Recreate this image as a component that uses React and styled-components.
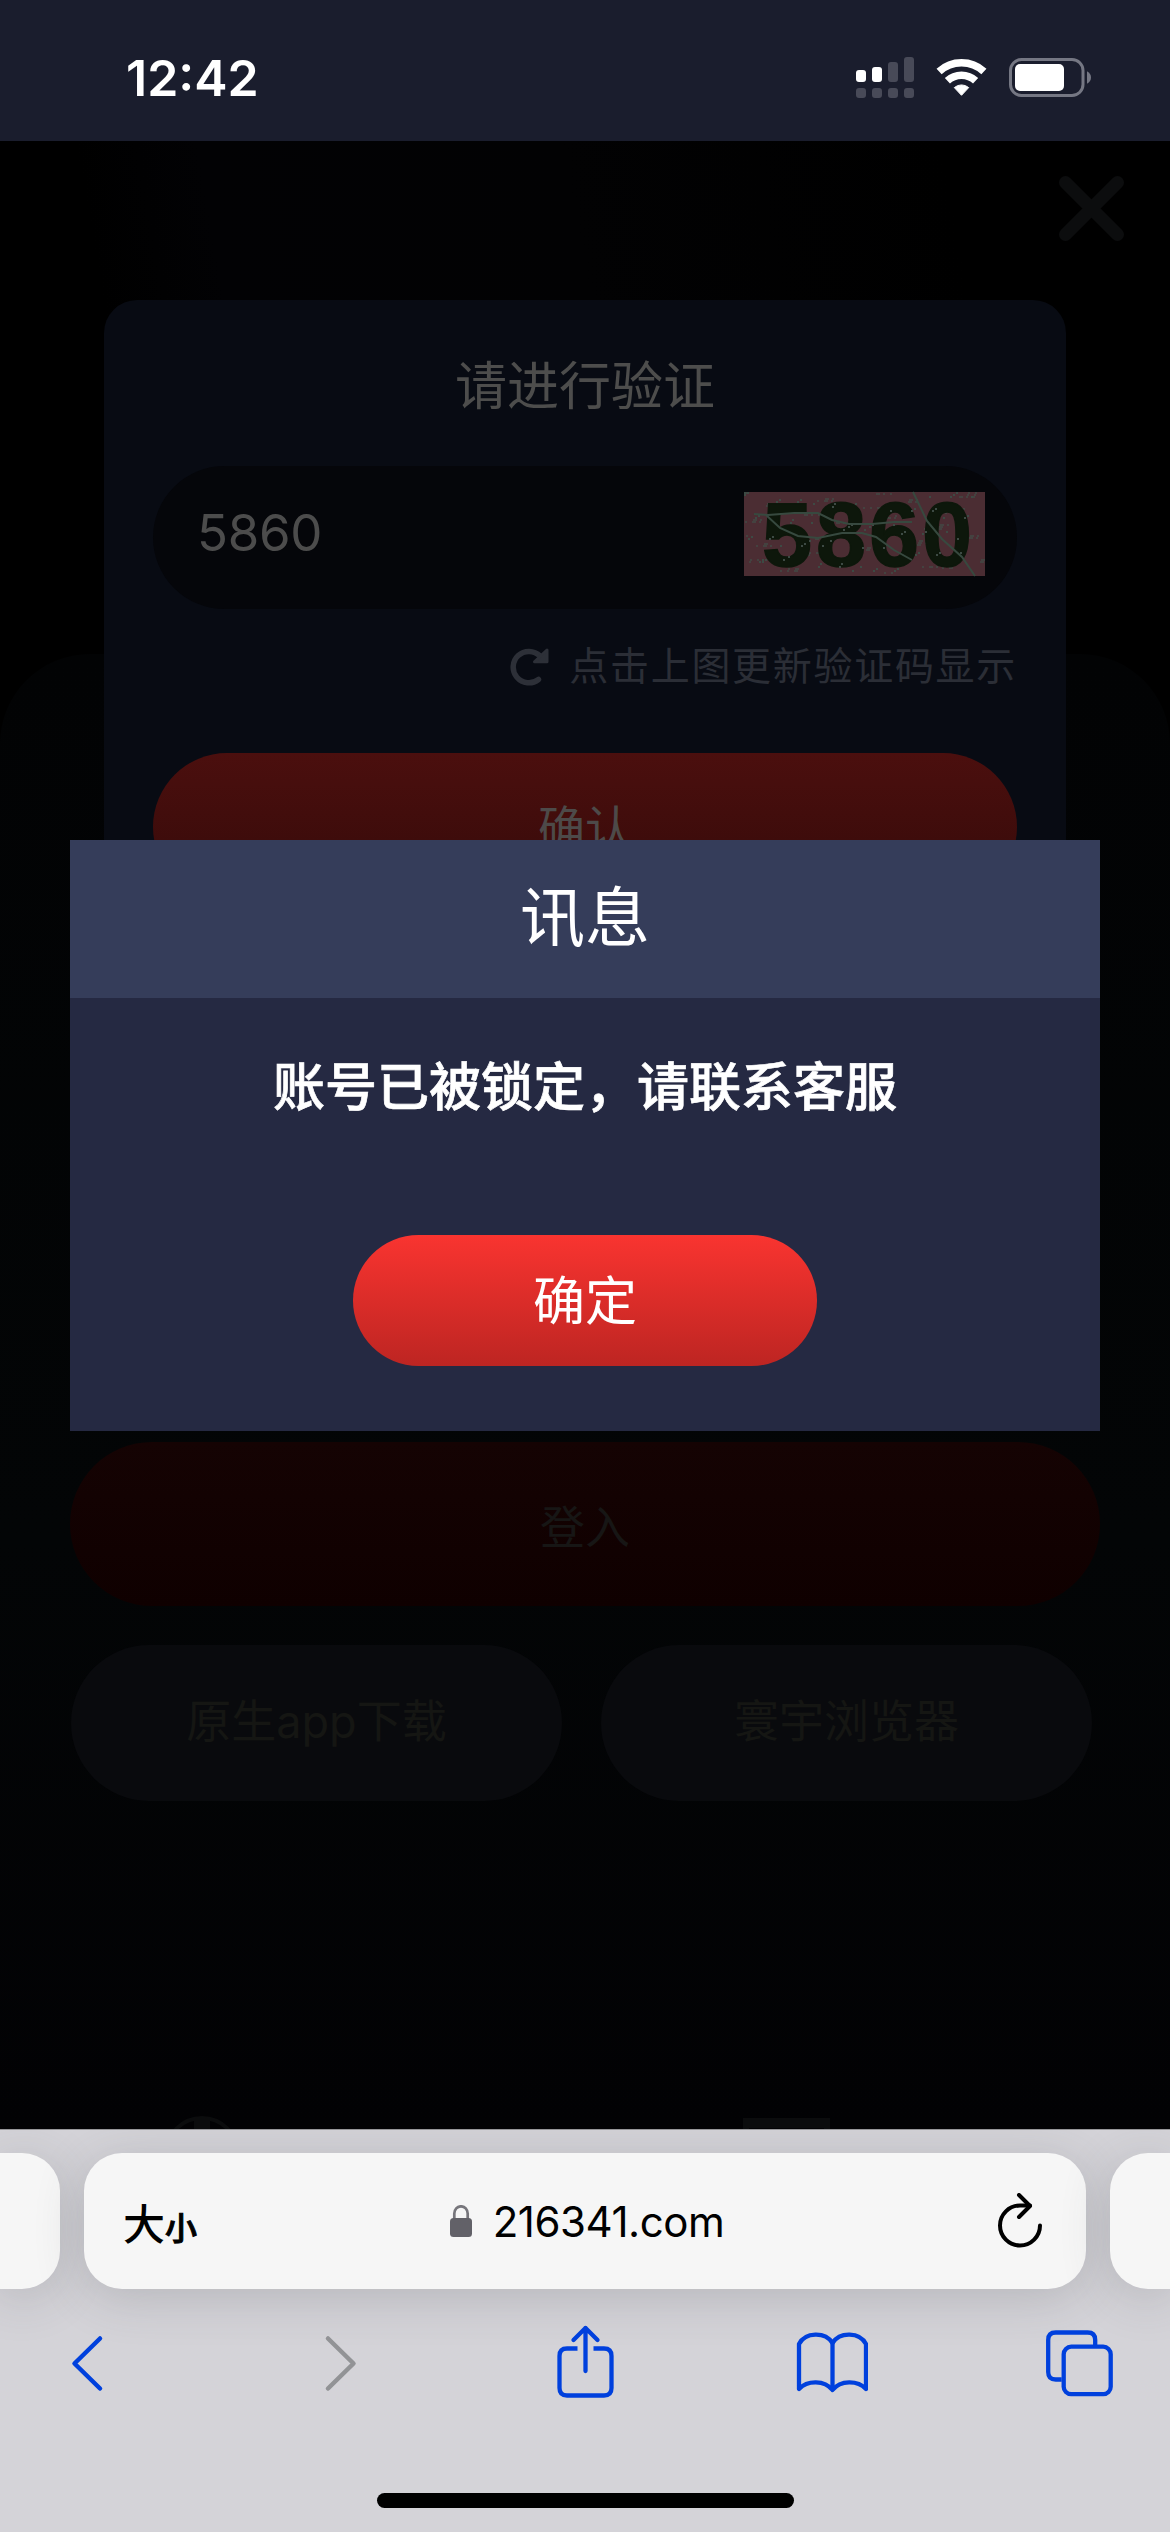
import styled, { createGlobalStyle } from 'styled-components';

const captchaSpecks = Array.from({ length: 130 }, (_, i) => ({
  x: (i * 67 + (i % 7) * 19) % 238,
  y: (i * 31 + (i % 5) * 13) % 81,
  w: i % 3 === 0 ? 4 : 2,
}));

export default function App() {
  return (
    <Screen>
      <GlobalStyle />
      <StatusBar>
        <Clock>12:42</Clock>
        <StatusIcons>
          <SignalIcon />
          <WifiIcon />
          <BatteryIcon />
        </StatusIcons>
      </StatusBar>

      <Page>
        <LoginPage>
          <LoginHeader>
            <svg width="67" height="67" viewBox="0 0 67 67" fill="none" stroke="#0c0d0e" strokeWidth="13" strokeLinecap="round">
              <path d="M7.500 7.500L59.500 59.500M59.500 7.500L7.500 59.500" />
            </svg>
          </LoginHeader>
          <LoginPanel>
            <LoginButton>登入</LoginButton>
            <LinkRow>
              <LinkButton>原生app下载</LinkButton>
              <LinkButton>寰宇浏览器</LinkButton>
            </LinkRow>
            <FooterIcons>
              <svg width="76" height="100" viewBox="0 0 76 100" fill="none" stroke="#0b0c0d" strokeWidth="4">
                <circle cx="38" cy="38" r="36" />
                <path d="M38 2v72" strokeWidth="16" />
              </svg>
              <svg width="87" height="100" viewBox="0 0 87 100" fill="none" stroke="#0b0c0d" strokeWidth="6">
                <path d="M3 100V8H84V100" />
                <path d="M0 7H87" strokeWidth="10" />
              </svg>
            </FooterIcons>
          </LoginPanel>
        </LoginPage>

        <VerifyCard>
          <VerifyTitle>请进行验证</VerifyTitle>
          <CodeField>
            <span>5860</span>
            <Captcha />
          </CodeField>
          <RefreshHint>
            <RefreshIcon />
            <span>点击上图更新验证码显示</span>
          </RefreshHint>
          <ConfirmButton>确认</ConfirmButton>
        </VerifyCard>

        <Dialog>
          <DialogTitle>讯息</DialogTitle>
          <DialogBody>
            <DialogMessage>账号已被锁定，请联系客服</DialogMessage>
            <DialogButton>确定</DialogButton>
          </DialogBody>
        </Dialog>
      </Page>

      <BrowserBar>
        <TabStrip>
          <SideTab $side="left" />
          <AddressBar>
            <TextSize>
              大<small>小</small>
            </TextSize>
            <Address>
              <LockIcon />
              216341.com
            </Address>
            <ReloadIcon />
          </AddressBar>
          <SideTab $side="right" />
        </TabStrip>
        <Tools>
          <BackIcon />
          <ForwardIcon />
          <ShareIcon />
          <BookIcon />
          <TabsIcon />
        </Tools>
        <HomeIndicator />
      </BrowserBar>
    </Screen>
  );
}

// Icons

function SignalIcon() {
  return (
    <svg width="58" height="44" viewBox="0 0 58 44" fill="#484a58">
      <rect x="0" y="14" width="10" height="12" rx="3" fill="#fff" />
      <rect x="16" y="11" width="10" height="15" rx="3" fill="#fff" />
      <rect x="32" y="6" width="10" height="20" rx="3" />
      <rect x="48" y="1" width="10" height="25" rx="3" />
      <rect x="0" y="32" width="10" height="10" rx="3" />
      <rect x="16" y="32" width="10" height="10" rx="3" />
      <rect x="32" y="32" width="10" height="10" rx="3" />
      <rect x="48" y="32" width="10" height="10" rx="3" />
    </svg>
  );
}

function WifiIcon() {
  return (
    <svg width="51" height="44" viewBox="0 -2 51 44" fill="none" stroke="#fff">
      <path d="M3.100 13.500A33.200 33.200 0 0 1 47.900 13.500" strokeWidth="7.600" />
      <path d="M11.400 22.700A20.800 20.800 0 0 1 39.600 22.700" strokeWidth="7.600" />
      <path d="M25.500 37.300L18.300 29.600A11 11 0 0 1 32.700 29.600Z" fill="#fff" strokeLinejoin="round" />
    </svg>
  );
}

function BatteryIcon() {
  return (
    <svg width="83" height="44" viewBox="0 -2 83 44">
      <rect x="1.500" y="1.500" width="72.500" height="36" rx="11" fill="none" stroke="#757783" strokeWidth="3" />
      <rect x="6" y="6" width="49" height="27" rx="5" fill="#fff" />
      <path d="M78 13.300Q82 15.500 82 19.500T78 25.700Z" fill="#757783" />
    </svg>
  );
}

function RefreshIcon() {
  return (
    <svg width="40" height="38" viewBox="0 0 40 38" fill="none" stroke="#2d3038" strokeWidth="5.500" strokeLinecap="round">
      <path d="M28.500 31.500A15.700 15.700 0 1 1 30 8" />
      <path d="M37 2V13.800H24.500Z" fill="#2d3038" strokeWidth="3" strokeLinejoin="round" />
    </svg>
  );
}

function Captcha() {
  return (
    <CaptchaImage viewBox="0 0 241 84">
      <rect width="241" height="84" fill="#4b2d33" />
      {captchaSpecks.map((s, i) => (
        <rect key={i} x={s.x} y={s.y} width={s.w} height="2" fill="#444240" />
      ))}
      <text x="18 72 125 178" y="74" fill="#0d170b" stroke="#0d170b" strokeWidth="1.500">5860</text>
      {captchaSpecks.slice(0, 75).map((s, i) => (
        <rect key={i} x={(s.x * 3) % 230} y={s.y} width="2" height="2" fill="#3d4a44" />
      ))}
      <g fill="none" stroke="#37493f" strokeWidth="2">
        <path d="M10 22L24 23L50 21H74L88 28L105 32H128L150 30H168" />
        <path d="M22 23L36 36L54 44L74 46L98 41H118L132 45L150 58L168 68" />
        <path d="M169 0L183 29L198 47L218 65L231 84" />
      </g>
    </CaptchaImage>
  );
}

function LockIcon() {
  return (
    <svg width="22" height="32" viewBox="0 0 22 32">
      <path d="M4.300 15V8.500a6.700 7.200 0 0 1 13.400 0V15" fill="none" stroke="#77767c" strokeWidth="2.700" />
      <rect y="13" width="22" height="19" rx="3.500" fill="#626168" />
    </svg>
  );
}

function ReloadIcon() {
  return (
    <svg width="44" height="56" viewBox="0 0 44 56" fill="none" stroke="#000" strokeWidth="4" strokeLinecap="round" strokeLinejoin="round">
      <path d="M42 32.500A20 20 0 1 1 22 12.500H32" />
      <path d="M21 2L32 13L21 24" />
    </svg>
  );
}

function BackIcon() {
  return (
    <svg width="72" height="76" viewBox="-20.500 0 72 76" fill="none" stroke="#0040dd" strokeWidth="4.500" strokeLinecap="round" strokeLinejoin="round">
      <path d="M28.500 14.500L3 39.500L28.500 64.500" />
    </svg>
  );
}

function ForwardIcon() {
  return (
    <svg width="72" height="76" viewBox="-25.500 0 72 76" fill="none" stroke="#929396" strokeWidth="4.500" strokeLinecap="round" strokeLinejoin="round">
      <path d="M3.500 14.500L29 39.500L3.500 64.500" />
    </svg>
  );
}

function ShareIcon() {
  return (
    <svg width="72" height="76" viewBox="-9 0 72 76" fill="none" stroke="#0040dd" strokeWidth="4.300">
      <path d="M20.500 24.500H10Q2.500 24.500 2.500 32V64Q2.500 71.500 10 71.500H47Q54.500 71.500 54.500 64V32Q54.500 24.500 47 24.500H36.500" />
      <path d="M28.500 47V4M16.500 16L28.500 4L40.500 16" strokeLinecap="round" strokeLinejoin="round" />
    </svg>
  );
}

function BookIcon() {
  return (
    <svg width="72" height="76" viewBox="-.5 0 72 76" fill="none" stroke="#0040dd" strokeWidth="4.300" strokeLinejoin="round">
      <path d="M2.500 20C9 8 28.500 7.500 36 19C43.500 7.500 63 8 69.500 20V65C61 56 44 56 36 66C28 56 11 56 2.500 65Z" />
      <path d="M36 19V66" />
    </svg>
  );
}

function TabsIcon() {
  return (
    <svg width="72" height="76" viewBox="-1.700 0 72 76" fill="none" stroke="#0040dd" strokeWidth="4.300">
      <path d="M16 55.500H10Q2.500 55.500 2.500 48V16Q2.500 8.500 10 8.500H42Q49.500 8.500 49.500 16V23" />
      <rect x="18" y="22.700" width="47" height="47.500" rx="7.500" />
    </svg>
  );
}

// Styled Components

const GlobalStyle = createGlobalStyle`
  * {
    box-sizing: border-box;
  }

  body {
    margin: 0;
    background: #000;
    font-family: Inter, 'Noto Sans CJK SC', sans-serif;
  }

  svg {
    display: block;
    flex-shrink: 0;
  }

  button {
    border: none;
    padding: 0;
    font-family: inherit;
    display: flex;
    align-items: center;
    justify-content: center;
  }
`;

const Screen = styled.div`
  width: 1170px;
  height: 2532px;
  display: flex;
  flex-direction: column;
  overflow: hidden;
`;

const StatusBar = styled.header`
  height: 141px;
  padding: 0 78px 0 126px;
  display: flex;
  justify-content: space-between;
  background: #1a1d2d;
`;

const Clock = styled.div`
  margin-top: 47px;
  line-height: 62px;
  font-size: 50px;
  font-weight: 600;
  color: #fff;
`;

const StatusIcons = styled.div`
  display: flex;
  align-items: flex-start;
  padding-top: 56px;

  svg:nth-child(2) {
    margin: 0 22px;
  }
`;

const Page = styled.main`
  flex: 1;
  position: relative;
  overflow: hidden;
  background: #010102;
`;

const LoginPage = styled.div`
  background: linear-gradient(80deg, #000 28%, #020204 36%, #020203 60%, #000 85%);
`;

const LoginHeader = styled.div`
  height: 513px;
  padding: 34px 45px 0;
  display: flex;
  justify-content: flex-end;
`;

const LoginPanel = styled.section`
  height: 1475px;
  padding: 788px 70px 0;
  border-radius: 90px 90px 0 0;
  overflow: hidden;
  background: linear-gradient(#020304, #030506 60%, #020204);
`;

const LoginButton = styled.button`
  width: 100%;
  height: 164px;
  border-radius: 82px;
  background: linear-gradient(#150303, #0f0000);
  color: #171615;
  font-size: 45px;
`;

const LinkRow = styled.div`
  display: grid;
  grid-template-columns: 491px 491px;
  gap: 39px;
  margin-top: 39px;
  padding-left: 1px;
`;

const LinkButton = styled.button`
  height: 156px;
  padding-bottom: 10px;
  border-radius: 78px;
  background: #090a0d;
  color: #151613;
  font-size: 45px;
`;

const FooterIcons = styled.div`
  display: flex;
  justify-content: space-between;
  margin-top: 315px;
  padding: 0 270px 0 94px;
`;

const VerifyCard = styled.section`
  position: absolute;
  top: 159px;
  left: 104px;
  width: 962px;
  height: 740px;
  padding: 53px 49px 0;
  border-radius: 33px;
  background: #080b13;
`;

const VerifyTitle = styled.h2`
  margin: 0;
  height: 113px;
  line-height: 68px;
  text-align: center;
  font-size: 52px;
  font-weight: 400;
  color: #4d4d4c;
`;

const CodeField = styled.div`
  height: 143px;
  padding: 0 32px 0 44px;
  display: flex;
  align-items: center;
  justify-content: space-between;
  border-radius: 72px;
  background: #05060a;
  color: #4c4c4c;
  font-size: 51px;

  span {
    margin-top: -11px;
    letter-spacing: -0.300px;
  }
`;

const CaptchaImage = styled.svg`
  width: 241px;
  height: 84px;
  margin-top: -7px;
  overflow: visible;
  font-family: 'Liberation Sans', sans-serif;
  font-size: 90px;
  font-weight: 700;
`;

const RefreshHint = styled.div`
  height: 144px;
  padding-bottom: 29px;
  display: flex;
  align-items: center;
  justify-content: flex-end;
  color: #2b2e36;
  font-size: 39px;
  letter-spacing: 1.700px;

  svg {
    margin-right: 19px;
  }

  span {
    margin-bottom: 8px;
  }
`;

const ConfirmButton = styled.button`
  width: 100%;
  height: 148px;
  padding-bottom: 5px;
  border-radius: 74px;
  background: linear-gradient(#4b0f0e, #350a09);
  color: #4d4a49;
  font-size: 47px;
`;

const Dialog = styled.section`
  position: absolute;
  top: 699px;
  left: 70px;
  width: 1030px;
  height: 591px;
  display: flex;
  flex-direction: column;
  background: #252942;
  color: #fff;
`;

const DialogTitle = styled.h1`
  margin: 0;
  height: 158px;
  line-height: 156px;
  text-align: center;
  font-size: 65px;
  font-weight: 400;
  background: #353d5a;
`;

const DialogBody = styled.div`
  display: flex;
  flex-direction: column;
  align-items: center;
  padding-top: 53px;
`;

const DialogMessage = styled.p`
  margin: 0;
  height: 184px;
  line-height: 74px;
  font-size: 52px;
  font-weight: 500;
  -webkit-text-stroke: 0.700px #fff;
`;

const DialogButton = styled.button`
  width: 464px;
  height: 131px;
  padding-bottom: 7px;
  border-radius: 66px;
  background: linear-gradient(#f93430, #bd2522);
  color: #fff;
  font-size: 52px;
`;

const BrowserBar = styled.footer`
  height: 403px;
  display: flex;
  flex-direction: column;
  align-items: center;
  border-top: 1px solid #98989b;
  background: #d4d3d8;
`;

const TabStrip = styled.div`
  width: 100%;
  padding-top: 23px;
  display: flex;
  justify-content: space-between;
`;

const Tab = styled.div`
  height: 136px;
  background: #f6f6f6;
  box-shadow: 0 8px 50px rgba(60, 65, 70, 0.2);
`;

const SideTab = styled(Tab)`
  width: 60px;
  border-radius: ${(props) => (props.$side === 'left' ? '0 38px 38px 0' : '38px 0 0 38px')};
`;

const AddressBar = styled(Tab)`
  width: 1002px;
  padding: 0 44px 0 39px;
  display: flex;
  align-items: center;
  justify-content: space-between;
  border-radius: 38px;
`;

const TextSize = styled.div`
  width: 80px;
  font-size: 42px;
  font-weight: 500;
  white-space: nowrap;

  small {
    font-size: 32px;
    -webkit-text-stroke: 1px #000;
  }
`;

const Address = styled.div`
  display: flex;
  align-items: center;
  gap: 21px;
  margin-right: 27px;
  font-size: 42px;
  letter-spacing: -0.450px;
`;

const Tools = styled.nav`
  width: 100%;
  margin-top: 35px;
  padding: 0 54px 0 51px;
  display: flex;
  justify-content: space-between;
`;

const HomeIndicator = styled.div`
  width: 417px;
  height: 15px;
  margin-top: 93px;
  border-radius: 8px;
  background: #000;
`;
